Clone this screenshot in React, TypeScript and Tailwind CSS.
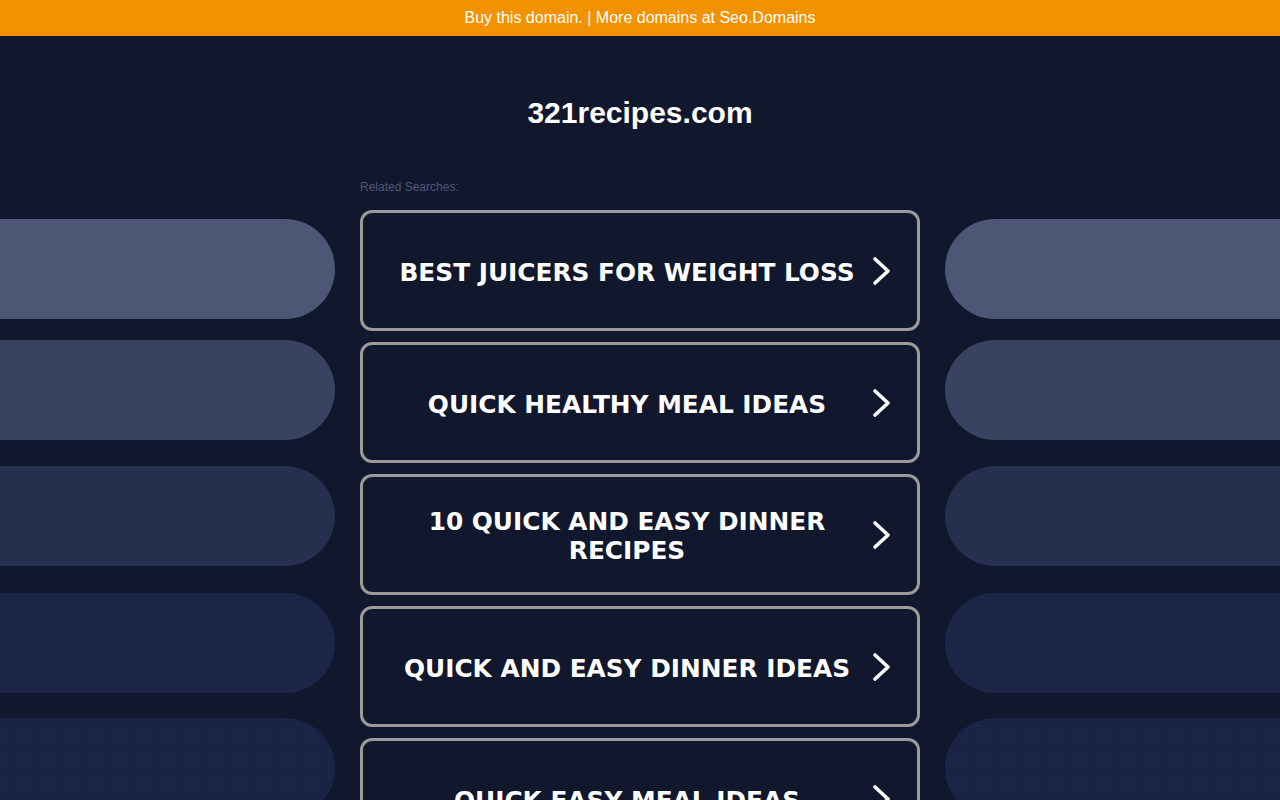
import React from 'react';

const searches = [
  'BEST JUICERS FOR WEIGHT LOSS',
  'QUICK HEALTHY MEAL IDEAS',
  '10 QUICK AND EASY DINNER RECIPES',
  'QUICK AND EASY DINNER IDEAS',
  'QUICK EASY MEAL IDEAS',
];

const pills = [
  { mt: 'mt-[219px]', bg: 'bg-[#4d5675]' },
  { mt: 'mt-[21px]', bg: 'bg-[#3a4261]' },
  { mt: 'mt-[26px]', bg: 'bg-[#262f4d]' },
  { mt: 'mt-[27px]', bg: 'bg-[#1c2545] bg-[radial-gradient(circle,#222c50_0.7px,transparent_0.7px)] bg-[length:3px_3px]' },
  { mt: 'mt-[25px]', bg: 'bg-[#1a2344] bg-[radial-gradient(circle,#222c52_0.8px,transparent_0.8px)] bg-[length:3px_3px]' },
];

function Chevron() {
  return (
    <svg width="22" height="30" viewBox="0 0 22 30" className="shrink-0">
      <path d="M4 3 L17 15 L4 27" fill="none" stroke="#ffffff" strokeWidth="3.6" strokeLinecap="round" strokeLinejoin="round" />
    </svg>
  );
}

function SidePills({ side }: { side: 'left' | 'right' }) {
  return (
    <div className="flex-1 flex flex-col">
      {pills.map((p, i) => (
        <div
          key={i}
          className={`${p.mt} h-[100px] ${p.bg} ${side === 'left' ? 'rounded-r-[50px]' : 'rounded-l-[50px]'}`}
        />
      ))}
    </div>
  );
}

export default function App() {
  return (
    <div className="h-[800px] overflow-hidden bg-[#11172d] font-['Liberation_Sans',Arial,sans-serif]">
      <div className="h-9 bg-[#f39200] flex items-center justify-center text-white text-[16px]">
        Buy this domain. | More domains at Seo.Domains
      </div>
      <div className="flex gap-[25px] -mt-9">
        <SidePills side="left" />
        <div className="w-[560px] shrink-0 flex flex-col pt-9">
          <h1 className="mt-[59px] text-center text-white font-bold text-[30px] leading-[36px]">321recipes.com</h1>
          <div className="mt-[49px] text-[12px] leading-[14px] text-[#4d5879]">Related Searches:</div>
          <div className="mt-[16px] flex flex-col gap-[11px]">
            {searches.map((s) => (
              <div
                key={s}
                className="h-[121px] border-[3px] border-[#9a9a9a] rounded-[12px] flex items-center pl-5 pr-6 bg-[#11172d]"
              >
                <div className="flex-1 pt-[3px] text-center text-white font-bold text-[24.8px] leading-[29px] font-['DejaVu_Sans',Verdana,sans-serif] px-1">
                  {s}
                </div>
                <Chevron />
              </div>
            ))}
          </div>
        </div>
        <SidePills side="right" />
      </div>
    </div>
  );
}
